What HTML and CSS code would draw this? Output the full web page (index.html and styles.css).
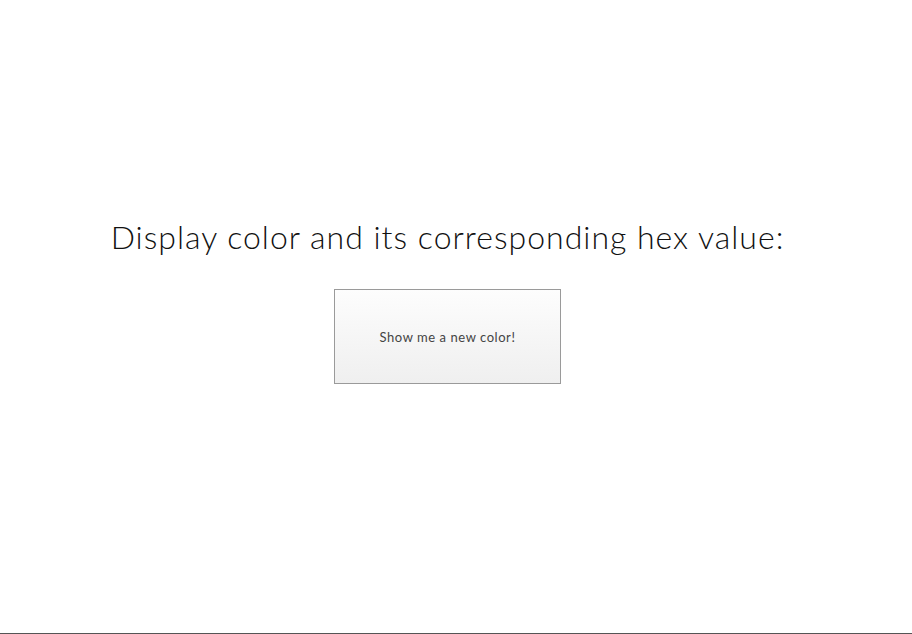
FILE: index.html
```html
<!DOCTYPE html>
<html>
<head>
<meta charset="utf-8">
<link rel="stylesheet" href="styles.css">
</head>
<body>
<main class="page">
  <h1 class="title">Display color and its corresponding hex value:</h1>
  <button class="btn">Show me a new color!</button>
</main>
</body>
</html>
```
FILE: styles.css
```css
html, body {
  margin: 0;
  padding: 0;
  background: #ffffff;
}
.page {
  box-sizing: border-box;
  height: 634px;
  border-bottom: 1px solid #555555;
  padding-right: 17px;
  display: flex;
  flex-direction: column;
  align-items: center;
  padding-top: 217px;
  font-family: Lato, "Open Sans", sans-serif;
}
.title {
  margin: 0;
  font-weight: 300;
  font-size: 32px;
  line-height: 40px;
  color: #111111;
  letter-spacing: 1px;
  white-space: nowrap;
}
.btn {
  margin-top: 32px;
  width: 227px;
  height: 95px;
  border: 1px solid #9a9a9a;
  background: linear-gradient(#fdfdfd, #efefef);
  font-family: Lato, sans-serif;
  font-size: 13px;
  color: #444444;
  letter-spacing: 0.55px;
  padding: 0;
}
```
